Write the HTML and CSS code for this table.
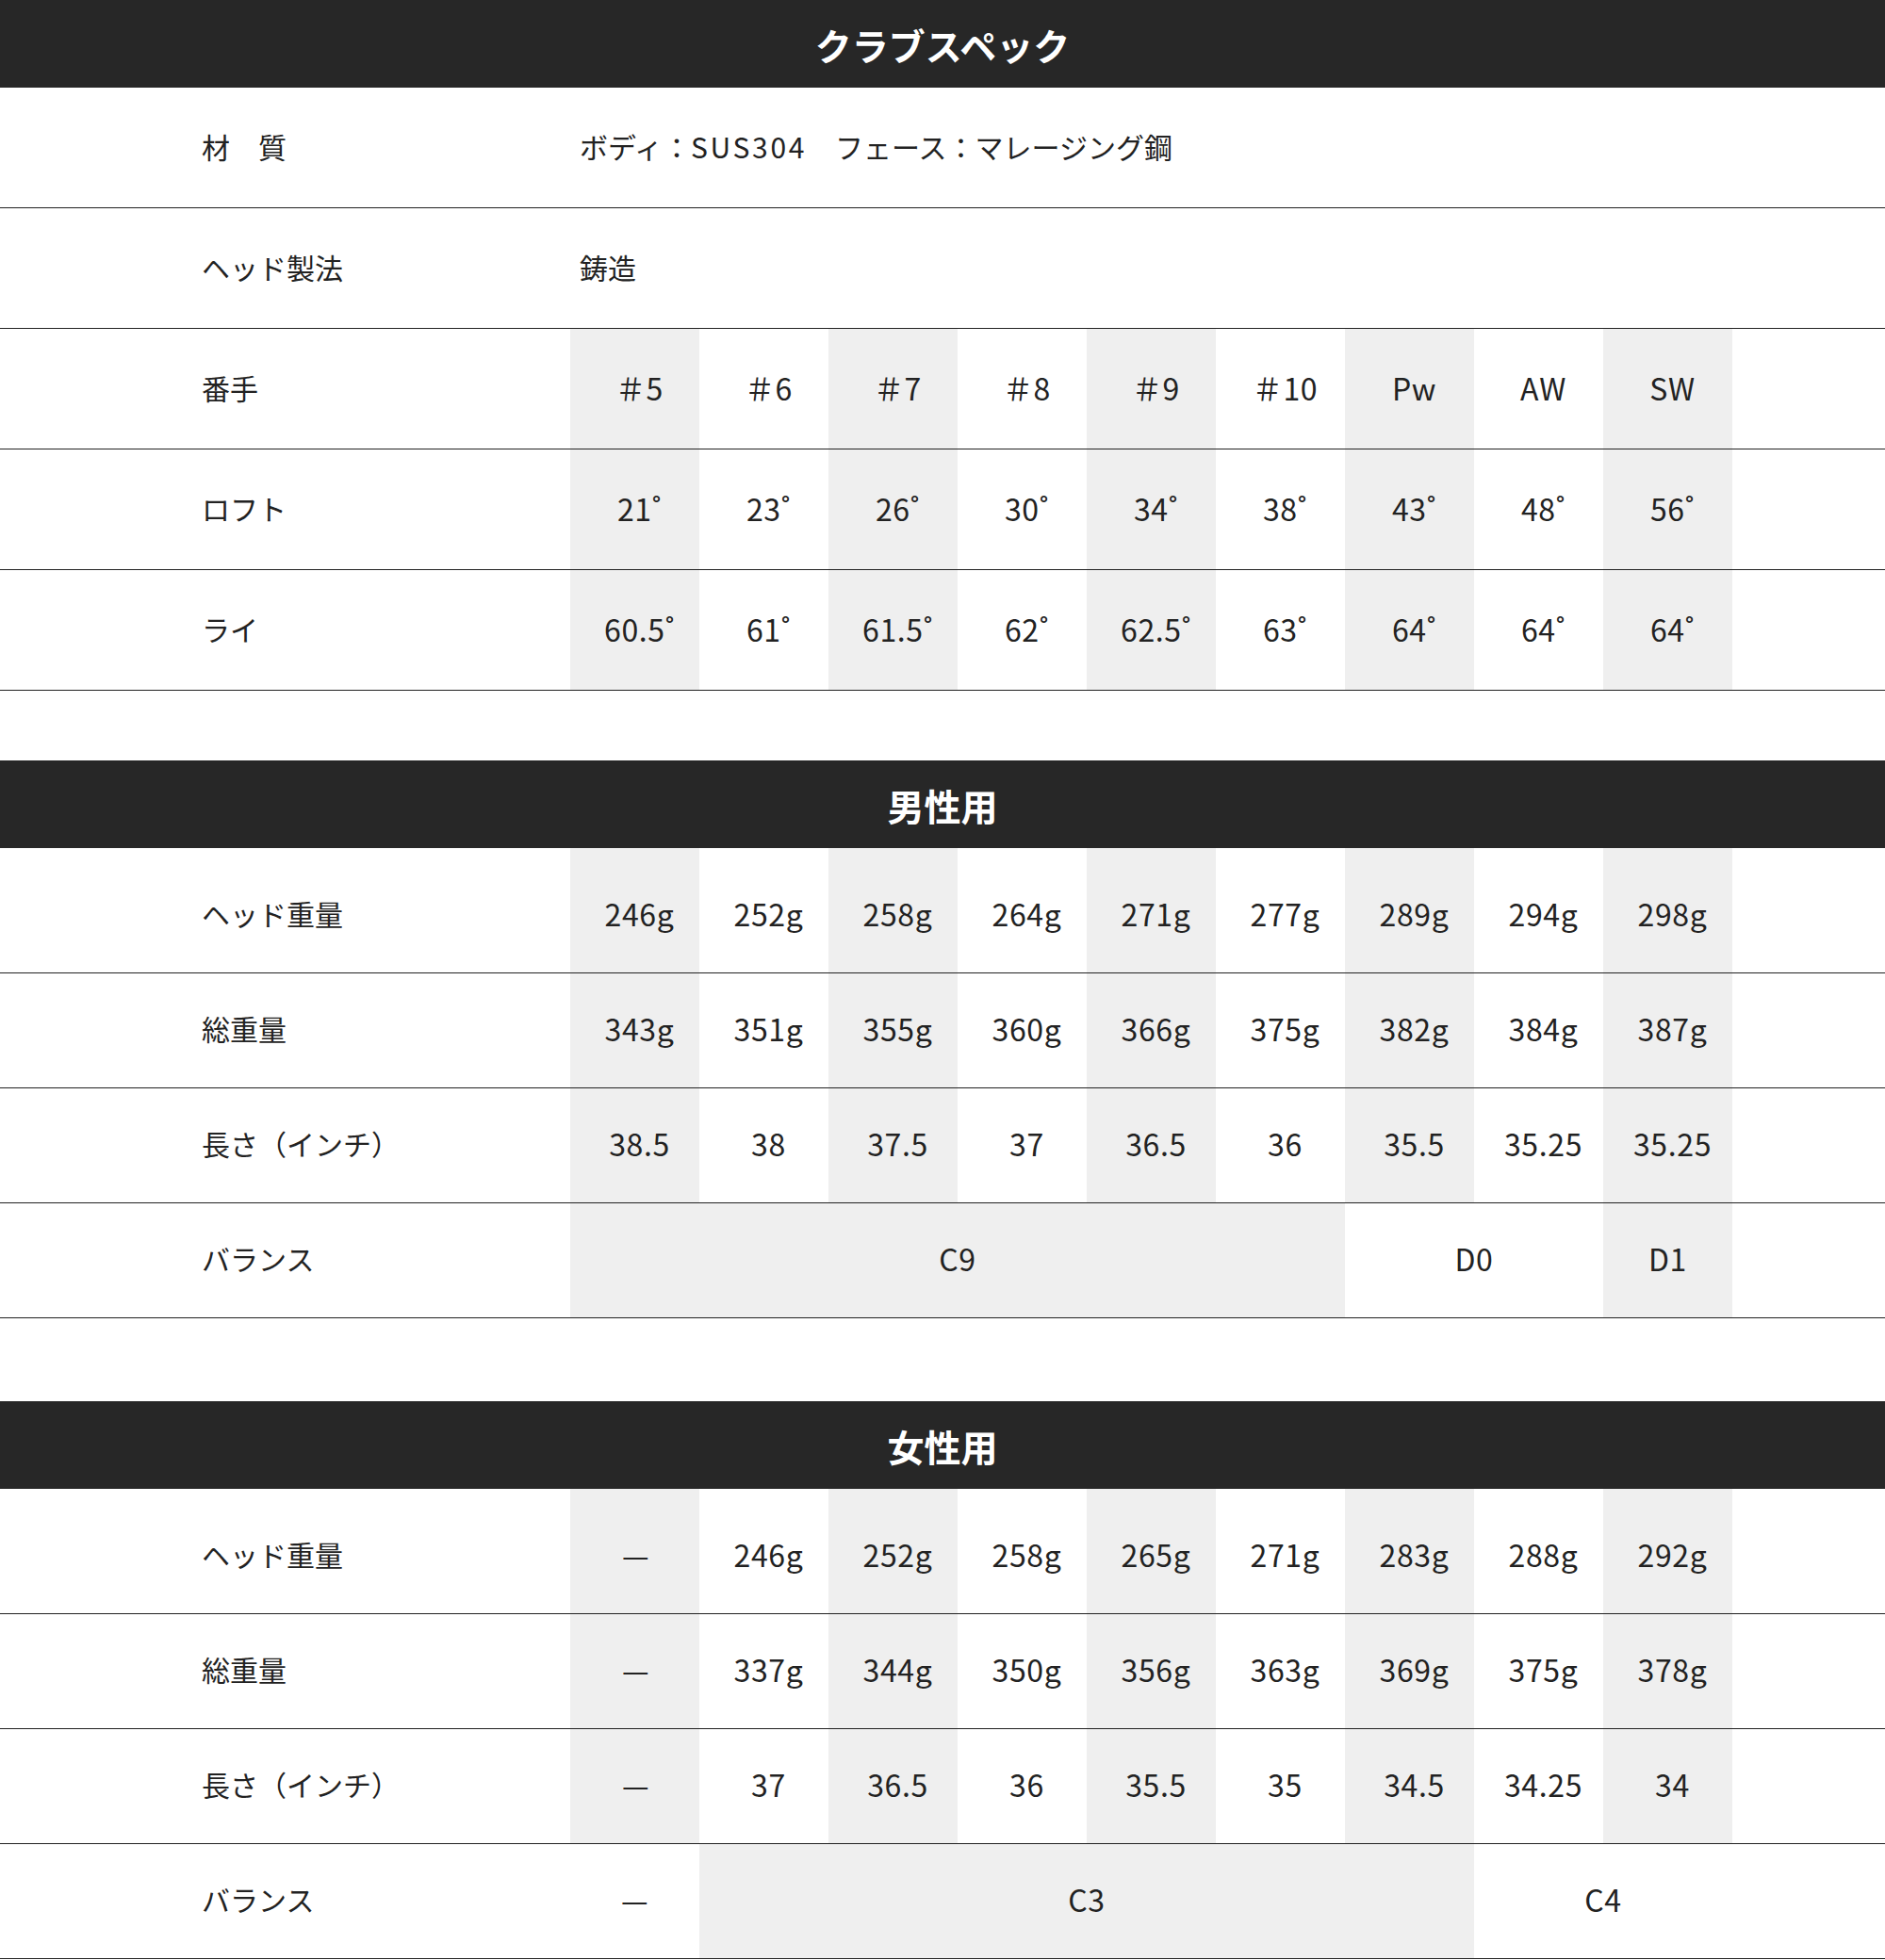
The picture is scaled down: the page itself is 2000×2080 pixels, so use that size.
FILE: index.html
```html
<!DOCTYPE html>
<html lang="ja">
<head>
<meta charset="utf-8">
<title>クラブスペック</title>
<link rel="stylesheet" href="styles.css">
</head>
<body>
<section class="spec spec-club">
  <h2 class="bar">クラブスペック</h2>
  <div class="row row-club">
    <div class="label">材　質</div>
    <div class="text">ボディ：<span class="latin">SUS304</span>　フェース：マレージング鋼</div>
  </div>
  <div class="row row-club">
    <div class="label">ヘッド製法</div>
    <div class="text">鋳造</div>
  </div>
  <div class="row row-club striped">
    <div class="label">番手</div>
    <div class="c">＃5</div><div class="c">＃6</div><div class="c">＃7</div><div class="c">＃8</div><div class="c">＃9</div><div class="c">＃10</div><div class="c">Pw</div><div class="c">AW</div><div class="c">SW</div>
  </div>
  <div class="row row-club striped">
    <div class="label">ロフト</div>
    <div class="c">21˚</div><div class="c">23˚</div><div class="c">26˚</div><div class="c">30˚</div><div class="c">34˚</div><div class="c">38˚</div><div class="c">43˚</div><div class="c">48˚</div><div class="c">56˚</div>
  </div>
  <div class="row row-club striped">
    <div class="label">ライ</div>
    <div class="c">60.5˚</div><div class="c">61˚</div><div class="c">61.5˚</div><div class="c">62˚</div><div class="c">62.5˚</div><div class="c">63˚</div><div class="c">64˚</div><div class="c">64˚</div><div class="c">64˚</div>
  </div>
</section>

<section class="spec spec-men">
  <h2 class="bar">男性用</h2>
  <div class="row row-first striped">
    <div class="label">ヘッド重量</div>
    <div class="c">246g</div><div class="c">252g</div><div class="c">258g</div><div class="c">264g</div><div class="c">271g</div><div class="c">277g</div><div class="c">289g</div><div class="c">294g</div><div class="c">298g</div>
  </div>
  <div class="row striped">
    <div class="label">総重量</div>
    <div class="c">343g</div><div class="c">351g</div><div class="c">355g</div><div class="c">360g</div><div class="c">366g</div><div class="c">375g</div><div class="c">382g</div><div class="c">384g</div><div class="c">387g</div>
  </div>
  <div class="row striped">
    <div class="label">長さ（インチ）</div>
    <div class="c">38.5</div><div class="c">38</div><div class="c">37.5</div><div class="c">37</div><div class="c">36.5</div><div class="c">36</div><div class="c">35.5</div><div class="c">35.25</div><div class="c">35.25</div>
  </div>
  <div class="row balance">
    <div class="label">バランス</div>
    <div class="c gray span-6">C9</div><div class="c span-2">D0</div><div class="c gray">D1</div>
  </div>
</section>

<section class="spec spec-women">
  <h2 class="bar">女性用</h2>
  <div class="row row-first striped">
    <div class="label">ヘッド重量</div>
    <div class="c dash">—</div><div class="c">246g</div><div class="c">252g</div><div class="c">258g</div><div class="c">265g</div><div class="c">271g</div><div class="c">283g</div><div class="c">288g</div><div class="c">292g</div>
  </div>
  <div class="row striped">
    <div class="label">総重量</div>
    <div class="c dash">—</div><div class="c">337g</div><div class="c">344g</div><div class="c">350g</div><div class="c">356g</div><div class="c">363g</div><div class="c">369g</div><div class="c">375g</div><div class="c">378g</div>
  </div>
  <div class="row striped">
    <div class="label">長さ（インチ）</div>
    <div class="c dash">—</div><div class="c">37</div><div class="c">36.5</div><div class="c">36</div><div class="c">35.5</div><div class="c">35</div><div class="c">34.5</div><div class="c">34.25</div><div class="c">34</div>
  </div>
  <div class="row balance">
    <div class="label">バランス</div>
    <div class="c dash">—</div><div class="c gray span-6">C3</div><div class="c span-2">C4</div>
  </div>
</section>
</body>
</html>
```

FILE: styles.css
```css
html, body {
  margin: 0;
  padding: 0;
  background: #ffffff;
}

body {
  width: 2000px;
  font-family: "Noto Sans CJK JP", "Noto Sans", sans-serif;
  color: #222222;
  font-size: 30px;
}

.spec {
  display: flex;
  flex-direction: column;
}

.spec-men {
  margin-top: 74px;
}

.spec-women {
  margin-top: 88px;
}

.bar {
  margin: 0;
  height: 93px;
  background: #272727;
  color: #ffffff;
  font-size: 39px;
  font-weight: 700;
  display: flex;
  align-items: center;
  justify-content: center;
  letter-spacing: 0;
}

.row {
  display: grid;
  grid-template-columns: 605px repeat(9, 137px) 1fr;
  height: 121px;
  border-bottom: 1px solid #222222;
}

.row > div {
  padding-bottom: 5px;
}

.row-club {
  height: 127px;
}

.row-club > div {
  padding-bottom: 3px;
}

.row-first {
  height: 132px;
}

.row-first > div {
  padding-top: 11px;
}

.label {
  display: flex;
  align-items: center;
  padding-left: 214px;
  white-space: nowrap;
}

.text {
  grid-column: 2 / -1;
  display: flex;
  align-items: center;
  padding-left: 10px;
  white-space: nowrap;
}

.latin {
  letter-spacing: 0.09em;
}

.c {
  display: flex;
  align-items: center;
  justify-content: center;
  white-space: nowrap;
  font-size: 32px;
  letter-spacing: 0.02em;
}

.striped > .c {
  padding-left: 10px;
}

.striped > .c.dash {
  padding-left: 2px;
}

.striped > .c:nth-child(even),
.c.gray {
  background: #efefef;
}

.span-6 {
  grid-column: span 6;
}

.span-2 {
  grid-column: span 2;
}
```
